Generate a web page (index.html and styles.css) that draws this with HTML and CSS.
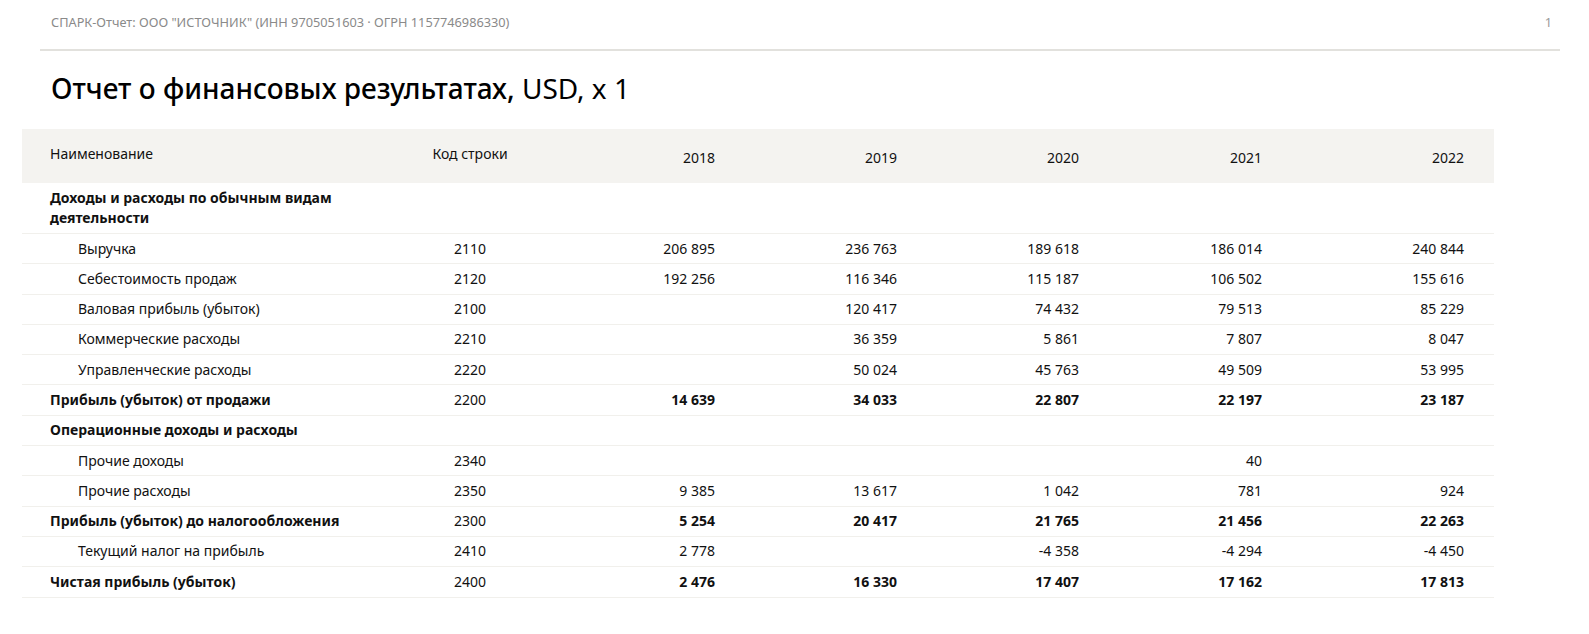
FILE: index.html
```html
<!DOCTYPE html>
<html lang="ru">
<head>
<meta charset="utf-8">
<title>Отчет о финансовых результатах</title>
<link rel="stylesheet" href="styles.css">
</head>
<body>
<header class="page-head">
  <div class="page-head__source">СПАРК-Отчет: ООО "ИСТОЧНИК" (ИНН 9705051603 · ОГРН 1157746986330)</div>
  <div class="page-head__num">1</div>
</header>
<h1 class="title"><span class="title__main">Отчет о финансовых результатах,</span> USD, x 1</h1>
<table class="report">
  <colgroup>
    <col class="c-name"><col class="c-code"><col class="c-y1"><col class="c-y2"><col class="c-y3"><col class="c-y4"><col class="c-y5">
  </colgroup>
  <thead>
    <tr>
      <th class="name">Наименование</th>
      <th class="code">Код строки</th>
      <th class="num">2018</th>
      <th class="num">2019</th>
      <th class="num">2020</th>
      <th class="num">2021</th>
      <th class="num last">2022</th>
    </tr>
  </thead>
  <tbody>
    <tr class="bold section">
      <td class="name">Доходы и расходы по обычным видам деятельности</td>
      <td class="code"></td><td class="num"></td><td class="num"></td><td class="num"></td><td class="num"></td><td class="num last"></td>
    </tr>
    <tr>
      <td class="name sub">Выручка</td><td class="code">2110</td>
      <td class="num">206 895</td><td class="num">236 763</td><td class="num">189 618</td><td class="num">186 014</td><td class="num last">240 844</td>
    </tr>
    <tr>
      <td class="name sub">Себестоимость продаж</td><td class="code">2120</td>
      <td class="num">192 256</td><td class="num">116 346</td><td class="num">115 187</td><td class="num">106 502</td><td class="num last">155 616</td>
    </tr>
    <tr>
      <td class="name sub">Валовая прибыль (убыток)</td><td class="code">2100</td>
      <td class="num"></td><td class="num">120 417</td><td class="num">74 432</td><td class="num">79 513</td><td class="num last">85 229</td>
    </tr>
    <tr>
      <td class="name sub">Коммерческие расходы</td><td class="code">2210</td>
      <td class="num"></td><td class="num">36 359</td><td class="num">5 861</td><td class="num">7 807</td><td class="num last">8 047</td>
    </tr>
    <tr>
      <td class="name sub">Управленческие расходы</td><td class="code">2220</td>
      <td class="num"></td><td class="num">50 024</td><td class="num">45 763</td><td class="num">49 509</td><td class="num last">53 995</td>
    </tr>
    <tr class="bold">
      <td class="name">Прибыль (убыток) от продажи</td><td class="code">2200</td>
      <td class="num">14 639</td><td class="num">34 033</td><td class="num">22 807</td><td class="num">22 197</td><td class="num last">23 187</td>
    </tr>
    <tr class="bold">
      <td class="name">Операционные доходы и расходы</td><td class="code"></td>
      <td class="num"></td><td class="num"></td><td class="num"></td><td class="num"></td><td class="num last"></td>
    </tr>
    <tr>
      <td class="name sub">Прочие доходы</td><td class="code">2340</td>
      <td class="num"></td><td class="num"></td><td class="num"></td><td class="num">40</td><td class="num last"></td>
    </tr>
    <tr>
      <td class="name sub">Прочие расходы</td><td class="code">2350</td>
      <td class="num">9 385</td><td class="num">13 617</td><td class="num">1 042</td><td class="num">781</td><td class="num last">924</td>
    </tr>
    <tr class="bold">
      <td class="name">Прибыль (убыток) до налогообложения</td><td class="code">2300</td>
      <td class="num">5 254</td><td class="num">20 417</td><td class="num">21 765</td><td class="num">21 456</td><td class="num last">22 263</td>
    </tr>
    <tr>
      <td class="name sub">Текущий налог на прибыль</td><td class="code">2410</td>
      <td class="num">2 778</td><td class="num"></td><td class="num">-4 358</td><td class="num">-4 294</td><td class="num last">-4 450</td>
    </tr>
    <tr class="bold">
      <td class="name">Чистая прибыль (убыток)</td><td class="code">2400</td>
      <td class="num">2 476</td><td class="num">16 330</td><td class="num">17 407</td><td class="num">17 162</td><td class="num last">17 813</td>
    </tr>
  </tbody>
</table>
</body>
</html>
```

FILE: styles.css
```css
* { box-sizing: border-box; }
html, body {
  margin: 0;
  padding: 0;
  background: #fff;
}
body {
  font-family: "Noto Sans", "Open Sans", sans-serif;
  color: #111;
  font-size: 14px;
}
.page-head {
  display: flex;
  justify-content: space-between;
  align-items: center;
  margin: 0 29px 0 40px;
  padding: 13px 8px 18px 11px;
  border-bottom: 2px solid #e2e1dd;
  font-size: 12.75px;
  line-height: 18px;
  color: #8a8a8a;
}
.page-head__num { color: #9a9a9a; }
.title {
  margin: 20px 0 24px 51px;
  font-size: 28px;
  line-height: 34px;
  font-weight: 400;
  color: #000;
}
.title__main { font-weight: 500; }
.report {
  margin-left: 22px;
  width: 1472px;
  table-layout: fixed;
  border-collapse: collapse;
}
.c-name { width: 373px; }
.c-code { width: 150px; }
.c-y1 { width: 180px; }
.c-y2 { width: 182px; }
.c-y3 { width: 182px; }
.c-y4 { width: 183px; }
.c-y5 { width: 222px; }
.report th {
  background: #f4f3f0;
  font-weight: 400;
  height: 54px;
  line-height: 20px;
  vertical-align: top;
  padding: 15px 10px 0 0;
}
.report th.num { padding-top: 19px; }
.report td {
  line-height: 20px;
  height: 30.3px;
  padding: 4.5px 10px 4.8px 0;
  border-bottom: 1px solid #f1f0ec;
  vertical-align: top;
}
.report .section td { padding-bottom: 5.5px; }
.report .name { text-align: left; padding-left: 28px; padding-right: 24px; }
.report .name.sub { padding-left: 56px; }
.report .code { text-align: center; padding-left: 0; padding-right: 0; }
.report .num { text-align: right; }
.report .num.last { padding-right: 30px; }
.report .bold td { font-weight: 700; }
.report .bold td.code { font-weight: 400; }
```
